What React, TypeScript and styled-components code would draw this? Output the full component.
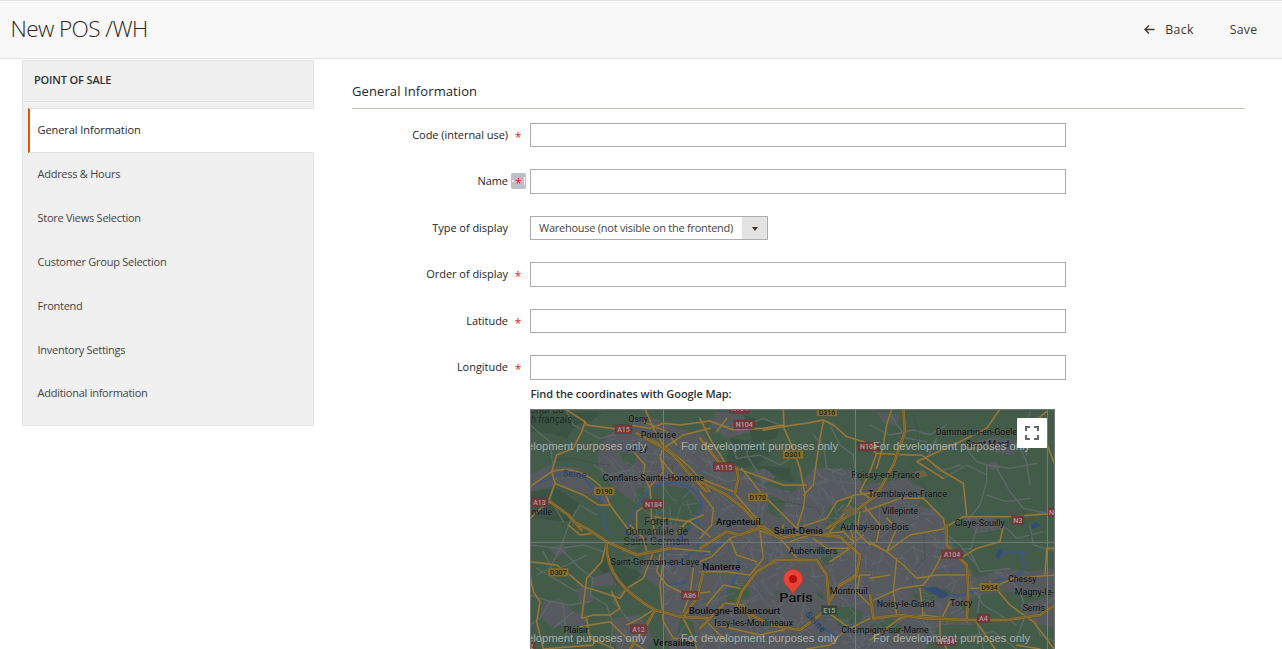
import React from 'react';
import styled, { createGlobalStyle } from 'styled-components';

const GlobalStyle = createGlobalStyle`
  *, *::before, *::after { box-sizing: border-box; }
  html, body { margin: 0; height: 649px; overflow: hidden; background: #fff; }
  body { font-family: 'Open Sans', 'Noto Sans', sans-serif; color: #41362f; font-size: 11px; }
`;

const Page = styled.div`
  height: 649px;
  overflow: hidden;
`;

const Header = styled.header`
  display: flex;
  align-items: center;
  justify-content: space-between;
  height: 59px;
  padding: 0 24.5px 0 10.5px;
  background: #f8f8f8;
  border-top: 1px solid #e3e3e3;
  border-bottom: 1px solid #e3e3e3;
`;

const Title = styled.h1`
  margin: 0 0 2px;
  font-size: 22.6px;
  font-weight: 300;
  line-height: 30px;
  letter-spacing: -0.6px;
  color: #2e2620;
`;

const Actions = styled.div`
  display: flex;
  gap: 36px;
`;

const Action = styled.button`
  display: flex;
  align-items: center;
  gap: 10px;
  padding: 0;
  border: 0;
  background: none;
  font: 450 12.3px/18px 'Open Sans', sans-serif;
  letter-spacing: 0.3px;
  color: #41362f;
`;

const Body = styled.div`
  display: flex;
  align-items: flex-start;
  padding: 1px 37px 0 22px;
`;

const Sidebar = styled.nav`
  width: 292px;
  height: 366px;
  flex: none;
  background: #f0f0f0;
  border: 1px solid #e3e3e3;
`;

const SidebarTitle = styled.div`
  height: 41px;
  padding: 0 11px;
  border-bottom: 1px solid #e3e3e3;
  font-size: 11px;
  font-weight: 600;
  line-height: 38px;
  letter-spacing: -0.15px;
  color: #303030;
`;

const Tabs = styled.div`
  padding: 6px 0 0 5px;
`;

const Tab = styled.div<{ $active?: boolean }>`
  height: ${p => (p.$active ? 45 : 43.9)}px;
  margin-right: ${p => (p.$active ? -1 : 0)}px;
  padding-left: ${p => (p.$active ? 7.5 : 9.5)}px;
  line-height: ${p => (p.$active ? 41.6 : 42.2)}px;
  font-weight: ${p => (p.$active ? 500 : 370)};
  letter-spacing: ${p => (p.$active ? -0.06 : -0.26)}px;
  color: ${p => (p.$active ? '#262626' : '#444')};
  background: ${p => (p.$active ? '#fff' : 'transparent')};
  border: 0 solid #e3e3e3;
  border-width: ${p => (p.$active ? '1px 0 1px 2px' : '0')};
  border-left-color: #eb5202;
`;

const Main = styled.main`
  flex: 1;
  margin-left: 38px;
`;

const SectionTitle = styled.h2`
  height: 49px;
  margin: 0 0 14px;
  padding-top: 21px;
  border-bottom: 1px solid #cac3b4;
  font-size: 13px;
  font-weight: 500;
  line-height: 20px;
  letter-spacing: 0.1px;
  color: #262626;
`;

const Field = styled.div`
  display: flex;
  height: 46.45px;
`;

const Label = styled.label`
  display: flex;
  justify-content: flex-end;
  width: 178px;
  flex: none;
  font-weight: 500;
  line-height: 24px;
  letter-spacing: -0.04px;
  color: #262626;
`;

const Mark = styled.span<{ $selected?: boolean }>`
  display: flex;
  align-items: center;
  justify-content: space-between;
  width: 15px;
  height: 16px;
  margin: 4px 4.5px 0 2.5px;
  padding: 0 1px;
  border-radius: 2px;
  background: ${p => (p.$selected ? '#b9c0c9' : 'transparent')};
`;

const Dot = styled.i`
  width: 2px;
  height: 2px;
  background: #e8edf2;
`;

const Caret = styled.i`
  width: 1px;
  height: 8px;
  background: #f4f7fa;
`;

const Star = styled.span`
  flex: 1;
  padding-top: 6px;
  text-align: center;
  font-size: 12px;
  line-height: 16px;
  font-weight: 400;
  color: #e22626;
`;

const Input = styled.input`
  width: 536px;
  height: 24.4px;
  padding: 0 8px;
  border: 1px solid #adadad;
  border-radius: 0;
  background: #fff;
  outline: 0;
`;

const Select = styled.div`
  display: flex;
  width: 238px;
  height: 24.4px;
  border: 1px solid #adadad;
  line-height: 22px;
  font-weight: 380;
  letter-spacing: -0.25px;
  color: #444;
`;

const SelectValue = styled.span`
  flex: 1;
  padding-left: 8px;
  white-space: nowrap;
`;

const SelectArrow = styled.span`
  display: flex;
  align-items: center;
  justify-content: center;
  width: 25px;
  padding-top: 2px;
  background: #e3e3e3;
`;

const MapBlock = styled.div`
  margin: -21.7px 0 0 178px;
`;

const MapCaption = styled.div`
  height: 29px;
  padding-left: 0.5px;
  font-size: 11px;
  font-weight: 600;
  line-height: 28px;
  letter-spacing: -0.09px;
  color: #303030;
`;

const MapFrame = styled.div`
  position: relative;
  width: 525px;
  height: 240px;
  overflow: hidden;
  background: #435c4a;

  & > svg { display: block; }
`;

const Fullscreen = styled.button`
  position: absolute;
  top: 9px;
  right: 8px;
  display: flex;
  align-items: center;
  justify-content: center;
  width: 30px;
  height: 30px;
  padding: 0;
  border: 0;
  border-radius: 1px;
  background: #fff;
`;

/* Map units are thirds of a pixel. */
const URBAN = [
  'M200 150L230 90 290 60 350 30 440 70 520 90 560 140 610 190 700 240 790 262 850 190 960 190 1000 240 1130 220 1195 260 1160 300 1230 320 1250 380 1280 440 1340 520 1420 490 1500 500 1575 490V570L1450 560 1340 570 1290 600 1330 660 1230 660 1180 740H420L395 640 400 560 350 520 300 480 270 430 320 370 325 300 255 250 215 210Z',
  'M0 210L60 180 150 190 190 240 250 260 230 300 180 270 90 240 0 260Z',
  'M60 430L100 415 110 440 80 455Z', 'M180 520L240 500 260 540 190 545Z', 'M40 590L90 580 130 620 180 630 160 660 60 665 30 630Z',
  'M560 20L640 30 660 80 590 100 540 60Z', 'M1040 20L1110 30 1100 60 1060 55Z', 'M1330 110L1400 95 1480 110 1450 150 1390 140Z',
  'M1290 330L1400 340 1430 370 1340 385Z', 'M1470 600L1575 570V670L1500 650Z', 'M250 640L330 630 370 700 350 740H260Z',
  'M1370 180L1400 170 1410 190 1380 195Z', 'M140 550L185 545 190 590 150 600Z', 'M660 205L700 190 740 215 700 240Z',
];
const PARKS = [
  'M320 250L400 240 470 250 510 300 500 340 470 380 400 350 390 380 320 390 315 320Z',
  'M235 390L310 400 390 420 400 460 350 450 330 500 270 480 240 450Z',
  'M600 540L650 530 660 570 630 600 590 590Z', 'M910 610L950 600 1000 620 990 650 930 665 905 640Z',
  'M890 310L960 270 1000 320 960 380 890 390Z', 'M270 140L320 150 310 190 280 170Z', 'M870 455L900 440 910 470 880 485Z',
  'M860 565L875 560 880 580 865 585Z', 'M735 560L745 555 748 565 738 570Z', 'M450 640L490 650 500 700 440 690Z',
  'M1020 660L1080 640 1120 670 1090 690Z', 'M720 270L770 290 750 340 710 320Z', 'M1140 570L1240 550 1280 570 1180 590Z',
];
const FORESTS = [
  'M0 20H220L180 50 140 60 110 100 60 85 0 80Z', 'M600 100L690 110 720 150 680 180 640 190 590 170Z',
  'M640 30L750 60 740 100 670 110Z', 'M240 430L340 460 330 510 290 550 230 520 200 480Z',
  'M670 180L780 190 790 230 720 220Z', 'M0 260L80 250 150 300 120 350 0 340Z',
];
const WATER = [
  'M0 245C60 220 100 195 130 200S180 240 205 275 210 340 235 385',
  'M285 385C310 330 320 290 360 255S470 230 500 265 510 340 470 380 405 430 390 480 420 550 470 530',
  'M500 330C520 400 510 420 490 440S430 500 410 470', 'M510 452C550 430 590 410 630 380',
  'M590 565C600 530 640 500 625 470', 'M830 620L855 650 880 670 930 700', 'M1160 540C1210 560 1260 580 1300 570S1360 530 1430 520 1480 480 1475 445',
  'M1400 455L1440 440 1490 445',
];
const MINOR = [
  'M0 60L60 110 70 190M110 20L130 60 210 100 250 90M190 180L240 210 300 195 330 240M80 220L60 280 100 350M120 350L150 300 200 330',
  'M540 50L620 70 700 40 760 65M600 110L620 160 690 150 750 180 780 160M660 110L650 150 700 230M520 200L590 230 650 220 710 250M900 60L930 120 970 150 980 220M850 90L880 120 890 190 940 210',
  'M1020 60L1080 90 1150 75 1200 90 1250 60M1080 30L1130 100 1190 110M1220 100L1190 160 1230 200 1290 180M1300 120L1340 170 1370 180 1370 230 1350 300 1300 360M1370 180L1440 190 1520 175M1370 210L1310 180 1240 220M1400 190L1440 260 1480 310 1575 330M1370 270L1430 290 1500 280M1460 110L1490 170 1500 240M1500 20L1480 80 1490 150',
  'M0 420L90 430 160 420 220 440M90 430L60 490 20 510M120 350L90 430 150 490 190 520M0 570L60 590 120 600 180 590M60 590L30 640 0 660M190 520L180 570 230 600 250 660 240 730M70 670L130 620M20 490L140 560M40 440L70 500 170 450M100 600L110 700 90 732M290 550L250 590 300 650',
  'M1240 380L1290 420 1330 470M1340 370L1320 440 1350 500 1440 490M1430 370L1460 400 1540 380M1500 360L1510 420 1575 440M1310 520L1360 600 1460 660M1350 570L1340 650 1360 730M1180 650L1210 690 1290 700 1390 680 1460 732M1430 510L1470 560 1490 620 1460 700M1570 580L1510 630 1530 690 1575 710M1210 420L1260 440 1320 430',
];
const ROADS = [
  'M165 50L170 60 260 72 300 60 360 70 400 55 450 60 540 48',
  'M110 15L165 50 155 80 130 130 80 150 65 200 0 245', 'M65 200C110 185 150 195 190 225S225 270 240 300L300 380',
  'M65 200L75 235 160 270 205 300 240 300M75 235L55 290 0 340',
  'M345 12L370 70 400 120 390 160 440 220', 'M315 145L345 180 340 210 360 250 365 345 375 380M365 290L320 320 320 380',
  'M320 85C390 110 420 135 455 165S520 230 540 260', 'M400 130L460 90 540 70M340 50L410 80 440 120',
  'M375 335L480 350 540 395M440 385L470 350 520 330M360 245L400 200 390 150',
  'M510 40L545 110 590 180 620 190 760 240 830 240M510 220L610 260 670 330 690 350',
  'M540 48L610 75 700 70 760 60M590 40L560 80M700 75L790 60 830 55 880 45 910 60 950 95 1000 110 1040 145',
  'M760 12L762 70 780 110 810 190 825 270 820 310 800 370M880 50L870 100 855 200 850 240 820 270M1040 145L1020 200 990 260 1020 280',
  'M510 260L550 310 545 360 510 400M635 190L690 260 760 330 800 370M800 370L890 340 920 290 975 270 1050 260',
  'M900 380L940 330 970 270M996 295L1050 360 1040 410M990 320L980 380 1020 420',
  'M1085 12L1070 60 1060 120 1040 190M1040 145L1140 150 1175 150 1240 200 1300 235 1310 330',
  'M1410 12L1370 70 1290 110 1160 170M1160 170L1240 220M1510 60L1540 90 1575 180M1550 20L1500 60',
  'M1000 320L1110 280 1180 280 1240 340 1250 390M1070 340L1100 370 1070 440 1020 410',
  'M1250 365L1300 335 1440 335 1575 325',
  'M1420 362L1410 410 1340 430 1290 460M1240 372L1140 390 1070 440 1010 410M1070 440L1120 480 1160 520 1220 510 1320 510M1080 510L1020 520M1100 460L1090 560 1100 630M1020 590L1110 550 1180 540 1210 500 1235 450',
  'M1020 705L1110 640 1180 630 1250 640M1170 550L1180 640M1260 590L1230 650 1230 690 1250 732M1320 550L1380 550 1450 520 1575 510M1380 530L1440 600 1510 650 1575 735M1545 510L1550 430 1575 430M1330 640L1360 680 1395 732M1460 720L1530 732',
  'M115 360L150 390 190 385 230 410 330 450 420 430 540 440M0 470L80 480 120 510 160 545 210 560 270 580 290 550 340 520 370 440',
  'M230 410L215 470 170 520 155 640 190 630 240 630 270 610 245 560M150 665L240 650 290 700 340 732M400 460L390 540 400 650',
  'M300 360L340 400 350 440 320 450M390 450L380 500 410 540 470 570 540 560M490 490L480 570 460 620M0 510L10 560 30 590 20 650 40 732 190 720',
  'M290 660L330 640 370 615M400 650L430 700 500 710M460 640L490 700 500 732M170 640L180 700 250 730',
  'M510 470L545 455 600 400 670 370 750 400M510 500L590 500 660 510 700 460 690 380M600 400L620 450 680 470',
  'M750 400L760 360M750 400L810 470M780 410L840 390 940 380 970 410M850 400L890 430 950 430 1000 390M970 410L960 360M900 470L960 430',
  'M585 595L640 600 660 640M530 600L580 540 630 550M780 670L690 690 560 660M530 650L590 710M900 560L990 510 1020 510M990 510L980 560 1020 600M890 620L960 670 1020 640M940 680L900 720 830 732',
];
const MOTORWAYS = [
  'M130 350L170 370 230 410C225 500 280 560 375 615L450 635 540 640 580 600',
  'M0 300L60 290 115 330 155 375M230 410L320 450 420 430',
  'M320 85L385 120 430 150 480 210 530 260M510 100L565 170 620 190 625 220 615 265',
  'M510 230L590 270 640 310 690 365 750 400',
  'M620 600L635 560 680 500 740 465 860 465 890 510 897 600 870 630 810 675 720 660 620 605Z',
  'M510 430L590 380 630 390 700 365 750 400 820 385 930 395 990 450 980 510 930 540 897 590',
  'M1120 12L1125 80 1090 180 1040 270 960 330 890 370',
  'M1250 360L1250 420 1310 480 1315 550 1310 650M1020 570L1030 640 1110 630 1190 640 1320 645 1430 645 1530 630 1575 600',
  'M300 732L350 660 375 615M540 640L510 670M460 635L500 580 520 500',
];

let seed = 11;
const rand = () => {
  seed = (seed * 16807) % 2147483647;
  return seed / 2147483647;
};
const STREETS = Array.from({ length: 620 }, () => {
  const x = 200 + rand() * 1300;
  const y = 60 + rand() * 670;
  const a = rand() * Math.PI;
  const l = 20 + rand() * 60;
  const dx = Math.cos(a) * l;
  const dy = Math.sin(a) * l;
  return `M${x.toFixed(0)} ${y.toFixed(0)}l${dx.toFixed(0)} ${dy.toFixed(0)}l${(dy / 3).toFixed(0)} ${(dx / 4).toFixed(0)}`;
}).join('');

type Place = [string, number, number, number, number?, number?];
/* name, x, baseline, width, size, weight */
const PLACES: Place[] = [
  ['Osny', 295, 52, 59], ['Pontoise', 332, 99, 106], ['Cergy', 287, 139, 66],
  ['Conflans-Sainte-Honorine', 218, 228, 304], ['nville', 5, 329, 61],
  ['Argenteuil', 558, 361, 134, 28, 500], ['Saint-Denis', 731, 386, 148, 27, 500],
  ['Dammartin-en-Goële', 1217, 90, 244], ['Saint-Mard', 1307, 126, 130],
  ['Roissy-en-France', 964, 219, 205], ['Tremblay-en-France', 1015, 277, 236],
  ['Villepinte', 1056, 327, 108], ['Aulnay-sous-Bois', 931, 374, 206], ['Claye-Souilly', 1274, 363, 150],
  ['Aubervilliers', 776, 446, 146], ['Saint-Germain-en-Laye', 242, 480, 266],
  ['Nanterre', 517, 496, 114, 28, 500], ['Montreuil', 899, 567, 114],
  ['Boulogne-Billancourt', 476, 628, 275, 28, 500], ['Issy-les-Moulineaux', 553, 664, 236],
  ['Plaisir', 101, 684, 74], ['Versailles', 369, 722, 127, 28, 500],
  ['Noisy-le-Grand', 1040, 606, 174], ['Torcy', 1260, 602, 67], ['Chessy', 1434, 531, 85],
  ['Magny-le-', 1454, 569, 117], ['Serris', 1478, 617, 67], ['Champigny-sur-Marne', 934, 684, 262],
  ['Paris', 748, 591, 100, 40, 500],
];
const SHIELDS: [string, number, number, number, string][] = [
  ['A15', 255, 59, 51, 'a'], ['A13', 4, 279, 49, 'a'], ['N184', 339, 284, 63, 'a'], ['D190', 191, 246, 63, 'd'],
  ['N104', 598, -2, 61, 'a'], ['N104', 612, 45, 61, 'a'], ['A115', 550, 173, 63, 'a'], ['D170', 653, 264, 61, 'd'],
  ['D301', 758, 136, 62, 'd'], ['D316', 860, 8, 62, 'd'], ['N104', 984, 112, 63, 'a'], ['N3', 1445, 332, 37, 'a'],
  ['N3', 1552, 309, 37, 'a'], ['A104', 1235, 434, 62, 'a'], ['D934', 1348, 533, 61, 'd'], ['A4', 1341, 627, 38, 'a'],
  ['D307', 54, 489, 62, 'd'], ['A86', 455, 558, 48, 'a'], ['A12', 301, 659, 49, 'a'], ['E15', 875, 602, 46, 'e'],
  ['N104', 1218, 695, 60, 'a'], ['A12', -34, 710, 49, 'a'],
];
const SHIELD_FILL: Record<string, string> = { a: '#75383b', d: '#83702e', e: '#30483b' };
const SHIELD_TEXT: Record<string, string> = { a: '#b3999a', d: '#272415', e: '#98a59c' };
const NOTICE = 'For development purposes only';

const MapDrawing = () => (
  <svg width="525" height="240" viewBox="0 12 1575 720" fontFamily="Roboto, sans-serif">
    <defs>
      <clipPath id="urban"><path d={URBAN.join('')} /></clipPath>
    </defs>
    <rect y="12" width="1575" height="720" fill="#435c4a" />
    <path d={FORESTS.join('')} fill="#3b5343" />
    <path d={URBAN.join('')} fill="#565a5f" />
    <path d={PARKS.join('')} fill="#435c4a" />
    <path d={STREETS} clipPath="url(#urban)" fill="none" stroke="#646970" strokeWidth="2" />
    <g fill="none" strokeLinejoin="round" strokeLinecap="round">
      <path d={MINOR.join('')} stroke="#5d6a66" strokeWidth="4" />
      <path d={WATER.join('')} stroke="#3f5779" strokeWidth="7" />
      <path d="M60 165L130 160 190 175 240 180M700 290L770 290 860 310 890 360M1150 30L1165 90 1140 170 1190 260M1180 380L1185 460 1145 500 1150 560 1190 650M370 180L430 185 420 230" stroke="#3e4644" strokeWidth="2" strokeDasharray="4 5" />
      <path d={ROADS.join('')} stroke="#605a42" strokeWidth="7" />
      <path d={ROADS.join('')} stroke="#93793a" strokeWidth="4.4" />
      <path d={MOTORWAYS.join('')} stroke="#5d4f2d" strokeWidth="11" />
      <path d={MOTORWAYS.join('')} stroke="#907434" strokeWidth="8" />
      <path d={MOTORWAYS.join('')} stroke="#62512b" strokeWidth="1.5" />
    </g>
    <path d="M1145 202L1180 195 1195 212 1160 222Z M935 315L960 300 990 320 950 340Z" fill="#6d6148" />
    <path d="M1180 550L1220 545 1260 570 1235 580 1200 560Z M1500 360L1520 352 1535 362 1505 372Z M1405 435L1420 430 1410 460 1395 455Z" fill="#344c72" />
    {SHIELDS.map(([t, x, y, w, kind], i) => (
      <g key={i}>
        <rect x={x} y={y} width={w} height="26" fill={SHIELD_FILL[kind]} stroke={kind === 'd' ? '#544b27' : '#4b383a'} strokeWidth="1" />
        <text x={x + w / 2} y={y + 21} textAnchor="middle" fontSize="21" fontWeight="500" fill={SHIELD_TEXT[kind]}>{t}</text>
      </g>
    ))}
    <g fill="#1f2c24" fontSize="30">
      <text x="0" y="24" fontStyle="italic" textLength="102" lengthAdjust="spacingAndGlyphs">onal du</text>
      <text x="2" y="54" fontStyle="italic" textLength="124" lengthAdjust="spacingAndGlyphs">h français</text>
      <text x="343" y="361" textLength="73" lengthAdjust="spacingAndGlyphs">Forêt</text>
      <text x="287" y="389" textLength="187" lengthAdjust="spacingAndGlyphs">domaniale de</text>
      <text x="281" y="421" textLength="197" lengthAdjust="spacingAndGlyphs">Saint Germain</text>
    </g>
    <g fill="#22385f" fontSize="27">
      <text x="98" y="213" transform="rotate(5 98 213)" textLength="70">Seine</text>
      <text x="825" y="630" transform="rotate(47 825 630)" textLength="74">Seine</text>
    </g>
    {PLACES.map(([t, x, y, w, size = 27, weight = 400]) => (
      <text key={t} x={x} y={y} textLength={w} lengthAdjust="spacingAndGlyphs" fontSize={size} fontWeight={weight} fill="#0d0e0f" stroke="#6a6d70" strokeOpacity="0.45" strokeWidth="3" paintOrder="stroke">{t}</text>
    ))}
    <path d="M400 12V732M976 12V732M1552 12V732M0 412H1575" stroke="#757e79" strokeWidth="3" fill="none" transform="translate(.5 0)" />
    <g fill="#a7acaa" fontFamily="'Liberation Sans', Arial, sans-serif" fontSize="33">
      {[136, 712].map(y => [-123, 453, 1029].map(x => (
        <text key={`${x}-${y}`} x={x} y={y} textLength="471" lengthAdjust="spacingAndGlyphs">{NOTICE}</text>
      )))}
    </g>
    <path d="M789 572C786 549 760 543 760 522A29 29 0 0 1 818 522C818 543 792 549 789 572Z" fill="#ea4335" stroke="#b9352c" strokeWidth="2" />
    <circle cx="789" cy="522" r="12" fill="#b31412" />
    <path d="M1.5 732V13.5H1573.5V732" fill="none" stroke="#727675" strokeWidth="3" />
  </svg>
);

const TABS = ['General Information', 'Address & Hours', 'Store Views Selection', 'Customer Group Selection', 'Frontend', 'Inventory Settings', 'Additional information'];

type FieldSpec = { label: string; required?: boolean; selected?: boolean; value?: string };
const FIELDS: FieldSpec[] = [
  { label: 'Code (internal use)', required: true },
  { label: 'Name', required: true, selected: true },
  { label: 'Type of display', value: 'Warehouse (not visible on the frontend)' },
  { label: 'Order of display', required: true },
  { label: 'Latitude', required: true },
  { label: 'Longitude', required: true },
];

export default function App() {
  return (
    <Page>
      <GlobalStyle />
      <Header>
        <Title>New POS /WH</Title>
        <Actions>
          <Action>
            <svg width="11" height="10" viewBox="0 0 11 10" fill="none" stroke="#41362f" strokeWidth="1.4">
              <path d="M10.5 4.5H1M5 .5L1 4.5l4 4" />
            </svg>
            Back
          </Action>
          <Action>Save</Action>
        </Actions>
      </Header>
      <Body>
        <Sidebar>
          <SidebarTitle>POINT OF SALE</SidebarTitle>
          <Tabs>
            {TABS.map((t, i) => <Tab key={t} $active={i === 0}>{t}</Tab>)}
          </Tabs>
        </Sidebar>
        <Main>
          <SectionTitle>General Information</SectionTitle>
          {FIELDS.map(f => (
            <Field key={f.label}>
              <Label>
                {f.label}
                <Mark $selected={f.selected}>
                  {f.selected && <Dot />}
                  {f.required && <Star>*</Star>}
                  {f.selected && <Caret />}
                </Mark>
              </Label>
              {f.value ? (
                <Select>
                  <SelectValue>{f.value}</SelectValue>
                  <SelectArrow>
                    <svg width="6" height="4" viewBox="0 0 6 4"><path d="M0 0h6L3 4z" fill="#41362f" /></svg>
                  </SelectArrow>
                </Select>
              ) : <Input />}
            </Field>
          ))}
          <MapBlock>
            <MapCaption>Find the coordinates with Google Map:</MapCaption>
            <MapFrame>
              <MapDrawing />
              <Fullscreen>
                <svg width="14" height="14" viewBox="0 0 14 14" fill="none" stroke="#666" strokeWidth="2">
                  <path d="M1 5V1h4M9 1h4v4M13 9v4H9M5 13H1V9" />
                </svg>
              </Fullscreen>
            </MapFrame>
          </MapBlock>
        </Main>
      </Body>
    </Page>
  );
}
